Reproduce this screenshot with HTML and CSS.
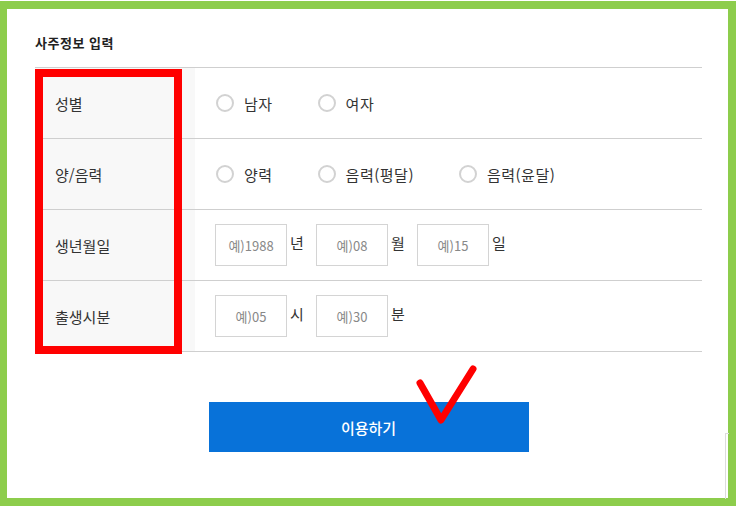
FILE: index.html
```html
<!DOCTYPE html>
<html lang="ko">
<head>
    <meta charset="UTF-8">
    <meta name="viewport" content="width=device-width, initial-scale=1.0">
    <title>사주정보 입력</title>
    <link rel="stylesheet" href="styles.css">
</head>
<body>
    <div class="frame">
        <div class="panel">
            <div class="section-title">사주정보 입력</div>

            <div class="form-table">
                <div class="row">
                    <div class="label">성별</div>
                    <div class="field">
                        <label class="choice"><input type="radio" name="gender"><span>남자</span></label>
                        <label class="choice"><input type="radio" name="gender"><span>여자</span></label>
                    </div>
                </div>
                <div class="row">
                    <div class="label">양/음력</div>
                    <div class="field">
                        <label class="choice"><input type="radio" name="calendar"><span>양력</span></label>
                        <label class="choice"><input type="radio" name="calendar"><span>음력(평달)</span></label>
                        <label class="choice"><input type="radio" name="calendar"><span>음력(윤달)</span></label>
                    </div>
                </div>
                <div class="row">
                    <div class="label">생년월일</div>
                    <div class="field">
                        <input class="num" type="text" placeholder="예)1988"><span class="unit">년</span>
                        <input class="num" type="text" placeholder="예)08"><span class="unit">월</span>
                        <input class="num" type="text" placeholder="예)15"><span class="unit">일</span>
                    </div>
                </div>
                <div class="row">
                    <div class="label">출생시분</div>
                    <div class="field">
                        <input class="num" type="text" placeholder="예)05"><span class="unit">시</span>
                        <input class="num" type="text" placeholder="예)30"><span class="unit">분</span>
                    </div>
                </div>
                <div class="mark-box"></div>
            </div>

            <div class="actions">
                <button class="submit">이용하기</button>
            </div>

            <svg class="check" width="73" height="70" viewBox="0 0 73 70">
                <polyline points="10,23 31,60 63,9" fill="none" stroke="#ff0000" stroke-width="7" stroke-linecap="round" stroke-linejoin="round"/>
            </svg>
        </div>
        <div class="edge"></div>
    </div>
</body>
</html>
```

FILE: styles.css
```css
* {
    box-sizing: border-box;
}

body {
    margin: 0;
    background-color: #fff;
    font-family: "Noto Sans CJK KR", "Noto Sans", sans-serif;
    color: #333;
}

.frame {
    position: relative;
    margin-top: 1px;
    width: 736px;
    height: 505px;
    border: 8px solid #8dcd4c;
    border-left-width: 7px;
    background-color: #fff;
}

.panel {
    position: relative;
    padding: 24px 26px 0 28px;
}

.section-title {
    font-size: 13px;
    font-weight: bold;
    line-height: 20px;
    letter-spacing: 0.5px;
    color: #222;
    margin-bottom: 14px;
}

.form-table {
    position: relative;
    border-top: 1px solid #cfcfcf;
}

.row {
    display: flex;
    height: 71px;
    border-bottom: 1px solid #cfcfcf;
}

.label {
    width: 160px;
    padding-left: 20px;
    background-color: #f8f8f8;
    display: flex;
    align-items: center;
    font-size: 15px;
}

.field {
    flex: 1;
    display: flex;
    align-items: center;
    padding-left: 20px;
    font-size: 15px;
}

.choice {
    display: flex;
    align-items: center;
    margin-left: 1px;
    margin-right: 44px;
    letter-spacing: 0.5px;
}

.choice input {
    appearance: none;
    width: 18px;
    height: 18px;
    margin: 0 10px 0 0;
    border: 2px solid #d2d2d2;
    border-radius: 50%;
    background-color: #fff;
}

.num {
    width: 72px;
    height: 42px;
    border: 1px solid #d4d4d4;
    font-family: inherit;
    font-size: 13px;
    text-align: center;
    padding: 0;
}

.num::placeholder {
    color: #888;
}

.unit {
    margin: 0 12px 6px 3px;
    width: 14px;
}

.mark-box {
    position: absolute;
    left: 0;
    top: 1px;
    width: 147px;
    height: 285px;
    border: 8px solid #ff0000;
}

.actions {
    display: flex;
    justify-content: center;
    padding-top: 50px;
}

.submit {
    width: 320px;
    height: 50px;
    border: none;
    background-color: #0872d9;
    color: #fff;
    font-family: inherit;
    font-size: 15px;
    font-weight: 500;
}

.check {
    position: absolute;
    left: 403px;
    top: 351px;
}

.edge {
    position: absolute;
    left: 718px;
    top: 424px;
    width: 4px;
    height: 66px;
    border-left: 1px solid #dcdcdc;
    border-top: 1px solid #dcdcdc;
}
```
